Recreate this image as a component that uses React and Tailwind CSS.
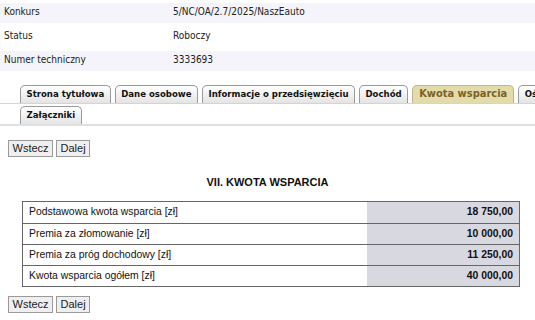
export default function App() {
  const info = [
    ["Konkurs", "5/NC/OA/2.7/2025/NaszEauto", true],
    ["Status", "Roboczy", false],
    ["Numer techniczny", "3333693", true],
  ];
  const tabs1 = ["Strona tytułowa", "Dane osobowe", "Informacje o przedsięwzięciu", "Dochód", "Kwota wsparcia", "Oświadczenia"];
  const rows = [
    ["Podstawowa kwota wsparcia [zł]", "18 750,00"],
    ["Premia za złomowanie [zł]", "10 000,00"],
    ["Premia za próg dochodowy [zł]", "11 250,00"],
    ["Kwota wsparcia ogółem [zł]", "40 000,00"],
  ];
  const cond = { fontFamily: '"DejaVu Sans Condensed", "DejaVu Sans", Verdana, sans-serif' };
  const arial = { fontFamily: '"Liberation Sans", Arial, sans-serif' };
  const Tab = ({ label, active }) => (
    <div
      style={cond}
      className={
        "shrink-0 h-[18px] flex items-center rounded-t-[5px] border border-b-0 whitespace-nowrap font-bold " +
        (active
          ? "bg-[#e4dbab] border-[#c2b783] text-[#7a6326] text-[11px] px-[6px]"
          : "bg-gradient-to-b from-white to-[#e4e4e4] border-[#9a9a9a] text-[#111] text-[9.5px] px-[5.5px]")
      }
    >
      {label}
    </div>
  );
  const Btn = ({ children }) => (
    <button className="h-[17px] px-[3.5px] bg-[#efefef] border border-[#9a9a9a] text-[11px] text-[#222] leading-none" style={arial}>
      {children}
    </button>
  );
  return (
    <div className="w-[535px] h-[320px] overflow-hidden bg-white" style={cond}>
      <div className="pt-[3px] flex flex-col gap-[4px]">
        {info.map(([k, v, shade]) => (
          <div key={k} className={"h-[20px] pb-[3px] flex items-center text-[10px] text-[#222] " + (shade ? "bg-[#f4f4fa]" : "")}>
            <div className="w-[173px] pl-[4px]">{k}</div>
            <div>{v}</div>
          </div>
        ))}
      </div>
      <div className="mt-[14px] overflow-hidden">
        <div className="flex gap-[4px] pl-[20px] border-b border-[#d4d4d4]">
          {tabs1.map((t) => (
            <Tab key={t} label={t} active={t === "Kwota wsparcia"} />
          ))}
        </div>
        <div className="flex gap-[4px] pl-[20px] pt-[2px] border-b-2 border-[#e0e0e0]">
          <Tab label="Załączniki" />
        </div>
      </div>
      <div className="mt-[14px] pl-[8px] flex gap-[3px]">
        <Btn>Wstecz</Btn>
        <Btn>Dalej</Btn>
      </div>
      <div className="mt-[17px] text-center text-[11px] font-bold text-[#111]" style={arial}>
        VII. KWOTA WSPARCIA
      </div>
      <div className="mt-[10px] ml-[22px] w-[498px] border border-[#666]" style={arial}>
        {rows.map(([k, v], i) => (
          <div key={k} className={"flex h-[21px] " + (i > 0 ? "border-t border-[#666]" : "")}>
            <div className="flex-1 flex items-center pl-[6px] text-[10.4px] text-[#111] bg-white">{k}</div>
            <div className="w-[152px] flex items-center justify-end pr-[6px] text-[10.4px] font-bold text-[#111] bg-[#d8d8e0]">{v}</div>
          </div>
        ))}
      </div>
      <div className="mt-[9px] pl-[8px] flex gap-[3px]">
        <Btn>Wstecz</Btn>
        <Btn>Dalej</Btn>
      </div>
    </div>
  );
}
